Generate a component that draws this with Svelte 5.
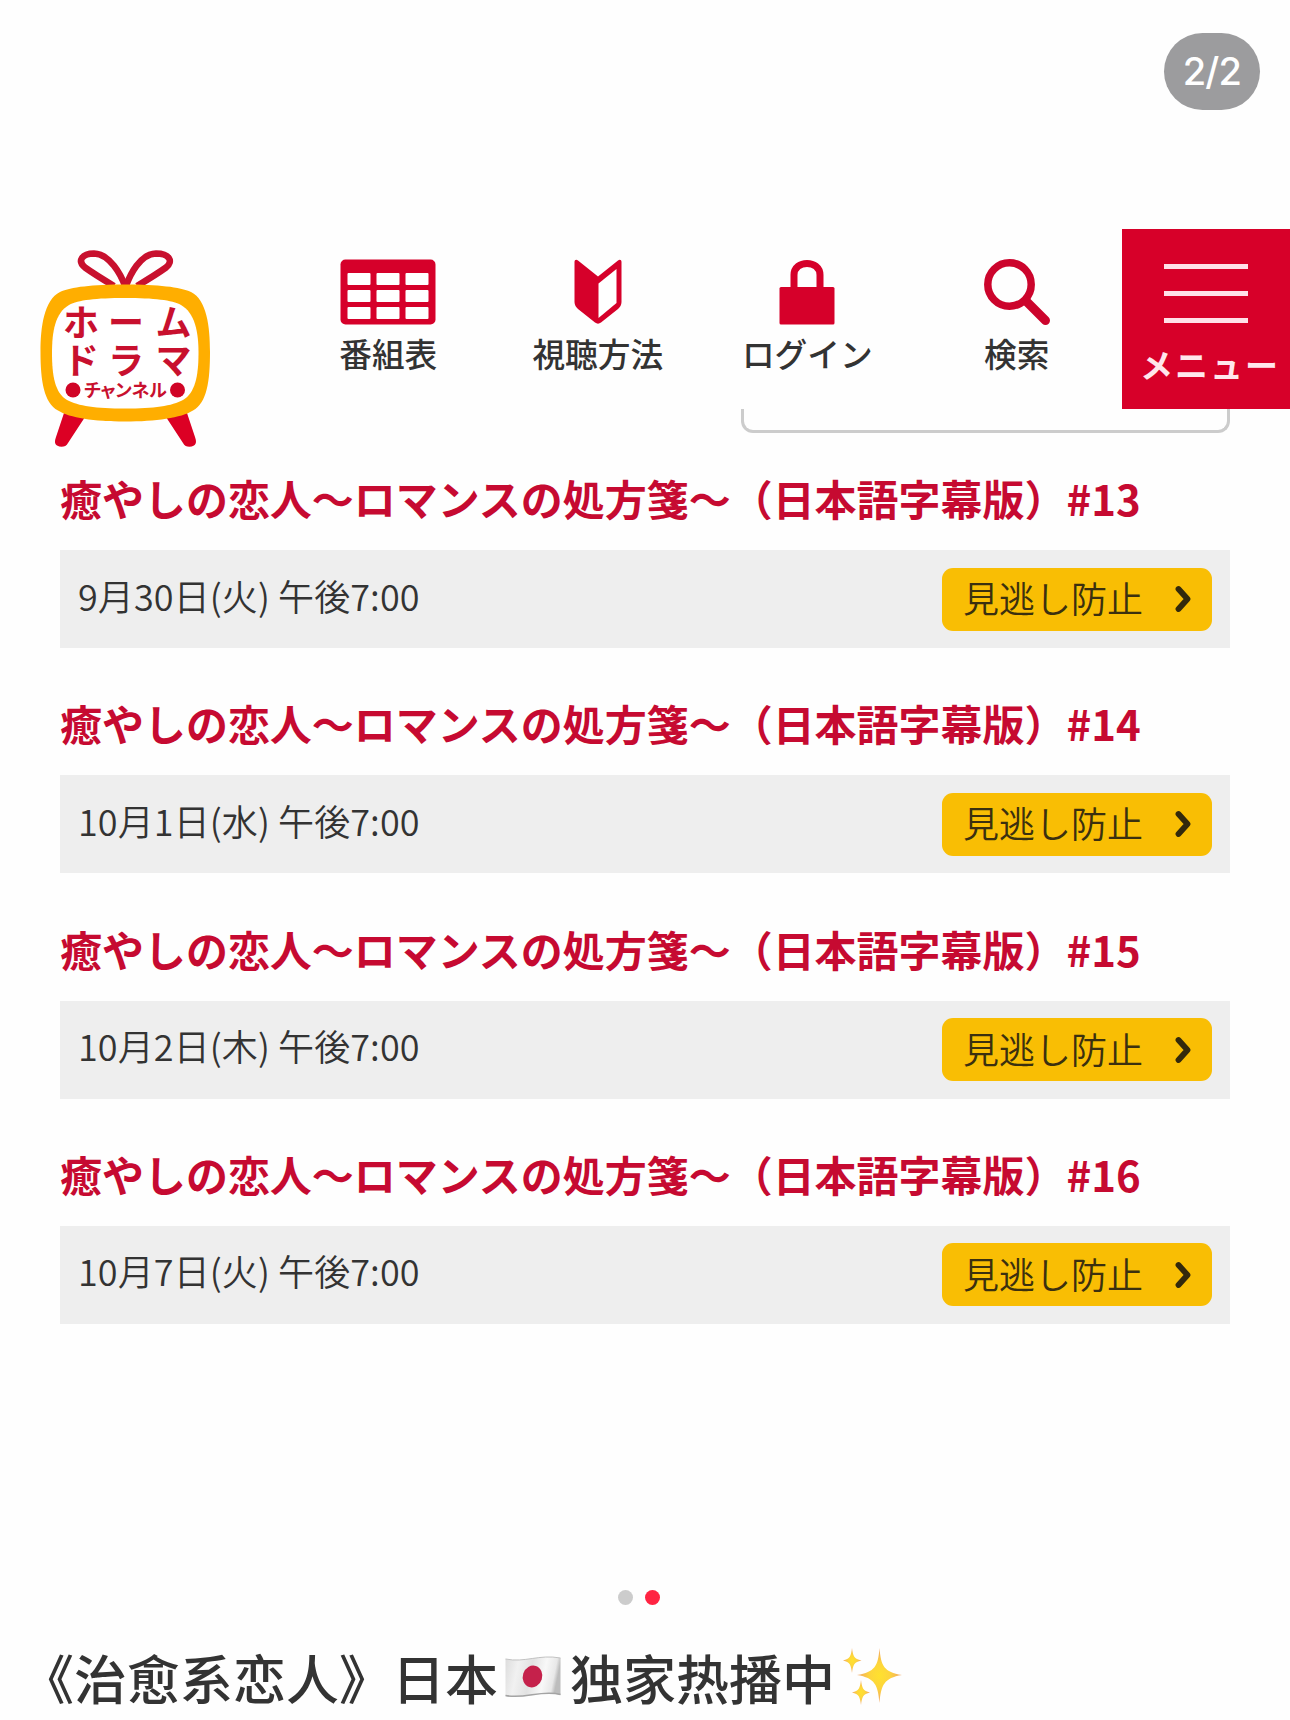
<script lang="ts">
	interface Episode {
		number: number;
		airs: string;
	}

	const title = '癒やしの恋人〜ロマンスの処方箋〜（日本語字幕版）';

	const episodes: Episode[] = [
		{ number: 13, airs: '9月30日(火) 午後7:00' },
		{ number: 14, airs: '10月1日(水) 午後7:00' },
		{ number: 15, airs: '10月2日(木) 午後7:00' },
		{ number: 16, airs: '10月7日(火) 午後7:00' }
	];

	const nav = [
		{ icon: 'table', label: '番組表' },
		{ icon: 'book', label: '視聴方法' },
		{ icon: 'lock', label: 'ログイン' },
		{ icon: 'search', label: '検索' }
	];

	const slides = 2;
	let current = $state(1);
</script>

<main class="post">
	<div class="topbar">
		<span class="counter">{current + 1}/{slides}</span>
	</div>

	<section class="slide">
		<header class="header">
			<div class="logo">
				<svg viewBox="0 0 220 200" width="220" height="200">
					<g fill="none" stroke="#c8102e" stroke-width="6.500" stroke-linejoin="round">
						<path d="M105 56C101 45 90 24 74 23.500C62 23.500 57 31 65 37.500C74 44 84 50 94 56" />
						<path d="M106 56C110 45 120 24 136 23.500C149 23.500 154 31 146 37.500C137 44 127 50 117 56" />
					</g>
					<path d="M44 183L65 187L48 213C46 217 41 218 37 215.500C34 213.500 35 210 36 207Z" fill="#dc0024" />
					<path d="M167 183L146 187L163 213C165 217 170 218 174 215.500C177 213.500 176 210 175 207Z" fill="#dc0024" />
					<path
						d="M105 54.500C138 54.500 160 57 171 62C187 70 190 97 190 122C190 151 187 173 173 180.500C161 188 136 191.500 105 191.500C74 191.500 50 188 38 180.500C24 173 20.500 151 20.500 122C20.500 97 24 70 40 62C51 57 72 54.500 105 54.500Z"
						fill="#ffae00"
					/>
					<path
						d="M105 68C134 68 152 70 161 75C175 83 178.500 102 178.500 123C178.500 146 175 163 163 170C152 176 134 178.500 105 178.500C76 178.500 58 176 47 170C35 163 32 146 32 123C32 102 35 83 49 75C58 70 76 68 105 68Z"
						fill="#fff"
					/>
					<g class="logo-text">
						<text x="43 88 135.500" y="105.500" font-size="36">ホーム</text>
						<text x="43 88 135.500" y="143.500" font-size="36">ドラマ</text>
						<text x="63.500 79 94.500 111.500 129" y="166.500" font-size="18">チャンネル</text>
					</g>
					<circle cx="53" cy="160" r="7.500" fill="#d00426" />
					<circle cx="157.500" cy="160" r="7.500" fill="#d00426" />
				</svg>
			</div>

			<nav class="nav">
				{#each nav as item}
					<a class="nav-item" href="#{item.icon}">
						{#if item.icon === 'table'}
							<svg viewBox="0 0 96 66" width="96" height="66">
								<rect x="0.500" y="0.500" width="95" height="65" rx="5" fill="#d6002a" />
								<g fill="#fff">
									{#each [14, 31, 48] as y}
										{#each [7.5, 36.5, 65.5] as x}
											<rect {x} {y} width="23" height="12" rx="1" />
										{/each}
									{/each}
								</g>
							</svg>
						{:else if item.icon === 'book'}
							<svg viewBox="0 0 48 66" width="48" height="66">
								<path d="M0.500 3C0.500 0.500 2.500 0 4 1.500L24 17.500L44 1.500C45.500 0 47.500 0.500 47.500 3V43C47.500 46 46 48 44 50L27 63.500C25 65 23 65 21 63.500L4 50C2 48 0.500 46 0.500 43Z" fill="#d6002a" />
								<path d="M24.500 24.500L42.500 10V44L24.500 59Z" fill="#fff" />
							</svg>
						{:else if item.icon === 'lock'}
							<svg viewBox="0 0 56 66" width="56" height="66">
								<path d="M15 30V16C15 0.500 41 0.500 41 16V30" fill="none" stroke="#d6002a" stroke-width="7" />
								<rect x="0.500" y="28" width="55" height="37.500" rx="1.500" fill="#d6002a" />
							</svg>
						{:else}
							<svg viewBox="0 0 66 66" width="66" height="66">
								<circle cx="25.500" cy="25.500" r="21.700" fill="none" stroke="#cc042c" stroke-width="7.500" />
								<path d="M43 43L61.500 61.500" fill="none" stroke="#cc042c" stroke-width="9" stroke-linecap="round" />
							</svg>
						{/if}
						<span>{item.label}</span>
					</a>
				{/each}
			</nav>

			<button class="menu" aria-label="メニュー">
				<span class="line"></span>
				<span class="line"></span>
				<span class="line"></span>
				<span class="menu-label">メニュー</span>
			</button>
		</header>

		<div class="select-edge"></div>

		<ul class="episodes">
			{#each episodes as episode (episode.number)}
				<li class="episode">
					<h2>{title}#{episode.number}</h2>
					<div class="bar">
						<time>{episode.airs}</time>
						<button class="remind">
							<span>見逃し防止</span>
							<svg viewBox="0 0 17 28" width="17" height="28">
								<path d="M3.500 4L12.500 14L3.500 24" fill="none" stroke="#33290c" stroke-width="5.800" stroke-linecap="round" stroke-linejoin="round" />
							</svg>
						</button>
					</div>
				</li>
			{/each}
		</ul>
	</section>

	<div class="dots">
		{#each { length: slides } as _, i}
			<button class="dot" class:active={i === current} aria-label="{i + 1}" onclick={() => (current = i)}></button>
		{/each}
	</div>

	<h1 class="caption">
		<span>《治愈系恋人》日本</span>
		<svg class="flag" viewBox="0 0 56 42" width="56" height="42">
			<defs>
				<linearGradient id="cloth" x1="0" x2="1" y1="0" y2="0.15">
					<stop offset="0" stop-color="#dcdcdc" />
					<stop offset="0.25" stop-color="#f1f1f1" />
					<stop offset="0.5" stop-color="#e2e2e2" />
					<stop offset="0.75" stop-color="#f8f8f8" />
					<stop offset="0.93" stop-color="#e8e8e8" />
					<stop offset="1" stop-color="#bdbdbd" />
				</linearGradient>
			</defs>
			<path d="M0.500 3C20 7 34 -2 55.500 2V39C36 34 20 44 0.500 40Z" fill="url(#cloth)" />
			<path d="M0.500 39.500C20 43.500 36 33.500 55.500 38.500" fill="none" stroke="#a4a4a4" stroke-width="1.500" />
			<path d="M0.500 3C20 7 34 -2 55.500 2" fill="none" stroke="#c2c2c2" />
			<ellipse cx="27.500" cy="20.500" rx="9.700" ry="11" transform="rotate(18 27.500 20.500)" fill="#c5214b" />
		</svg>
		<span>独家热播中</span>
		<svg class="sparkles" viewBox="0 0 60 60" width="60" height="60">
			<defs>
				<radialGradient id="glow">
					<stop offset="0" stop-color="#ffe12e" />
					<stop offset="0.45" stop-color="#fdd53c" />
					<stop offset="1" stop-color="#f0a468" />
				</radialGradient>
			</defs>
			<g fill="url(#glow)">
				<path d="M36.500 1C38 19 41 25 59 28C41 31 38 38 36.500 56C35 38 32 31 14 28C32 25 35 19 36.500 1Z" />
				<path d="M9 1C10 9 11 12 18.500 13.500C11 15 10 18 9 26C8 18 7 15 0 13.500C7 12 8 9 9 1Z" />
				<path d="M18 33C19 41 20 44 27 45.500C20 47 19 50 18 58C17 50 16 47 9 45.500C16 44 17 41 18 33Z" />
			</g>
		</svg>
	</h1>
</main>

<style>
	:global(body) {
		margin: 0;
		background: #fff;
	}

	.post {
		box-sizing: border-box;
		width: 1290px;
		height: 1720px;
		overflow: hidden;
		display: flex;
		flex-direction: column;
		background: #fefefe;
		color: #333;
		font-family: 'Noto Sans CJK JP', sans-serif;
	}

	button {
		border: 0;
		padding: 0;
		font: inherit;
		color: inherit;
	}

	svg {
		display: block;
		flex-shrink: 0;
	}

	.topbar {
		box-sizing: border-box;
		height: 229px;
		padding: 33px 30px 0 0;
		display: flex;
		justify-content: flex-end;
	}

	.counter {
		width: 96px;
		height: 77px;
		border-radius: 39px;
		background: #9c9c9e;
		color: #fff;
		font: 500 38px/76px Inter, sans-serif;
		letter-spacing: -0.8px;
		text-align: center;
	}

	.slide {
		height: 1352px;
	}

	.header {
		height: 179.5px;
		display: grid;
		grid-template-columns: 283.5px 838.5px 168px;
	}

	.logo {
		padding: 1px 0 0 20px;
	}

	.logo svg {
		overflow: visible;
	}

	.logo-text {
		fill: #c8102e;
		font-weight: 700;
	}

	.nav {
		display: grid;
		grid-template-columns: repeat(4, 209.5px);
	}

	.nav-item {
		padding-top: 29.5px;
		display: flex;
		flex-direction: column;
		align-items: center;
		gap: 7px;
		color: #333;
		font-size: 32.7px;
		font-weight: 500;
		line-height: 42px;
		text-decoration: none;
	}

	.menu {
		box-sizing: border-box;
		height: 179.5px;
		padding-top: 35px;
		display: flex;
		flex-direction: column;
		align-items: center;
		gap: 22px;
		background: #d70029;
		color: #ffe6ec;
	}

	.line {
		width: 84px;
		height: 5px;
		flex-shrink: 0;
		background: #ffe0e8;
	}

	.menu-label {
		padding-left: 8px;
		font-size: 33px;
		font-weight: 700;
		line-height: 38px;
		letter-spacing: 2px;
		white-space: nowrap;
	}

	/* bottom of the form field scrolled under the header */
	.select-edge {
		box-sizing: border-box;
		width: 489px;
		height: 24px;
		margin-left: 741px;
		border: 3px solid #ccc;
		border-top: 0;
		border-radius: 0 0 12px 12px;
	}

	.episodes {
		list-style: none;
		margin: 34.5px 60px 0;
		padding: 0;
	}

	.episode {
		margin-bottom: 44.2px;
	}

	h2 {
		margin: 0 0 20.2px;
		color: #c60a31;
		font-size: 41.98px;
		font-weight: 700;
		line-height: 62.9px;
		white-space: nowrap;
	}

	.bar {
		box-sizing: border-box;
		height: 98px;
		padding: 0 18px;
		display: flex;
		align-items: center;
		justify-content: space-between;
		background: #eee;
	}

	time {
		padding-bottom: 9px;
		font-size: 36px;
		font-weight: 350;
		line-height: 50px;
		letter-spacing: 0.1px;
	}

	.remind {
		box-sizing: border-box;
		width: 270px;
		height: 63px;
		padding: 0 20px 0 21px;
		display: flex;
		align-items: center;
		justify-content: space-between;
		border-radius: 11px;
		background: #f9be04;
		color: #3b300f;
		font-size: 36px;
		font-weight: 350;
		line-height: 50px;
	}

	.remind span {
		padding-bottom: 4px;
	}

	.dots {
		height: 33px;
		padding-right: 12px;
		display: flex;
		align-items: center;
		justify-content: center;
		gap: 12px;
	}

	.dot {
		width: 15px;
		height: 15px;
		border-radius: 50%;
		background: #ccc;
	}

	.dot.active {
		background: #ff2442;
	}

	.caption {
		margin: 25px 0 0 21px;
		display: flex;
		align-items: center;
		font-family: 'Noto Sans CJK SC', sans-serif;
		font-size: 53px;
		font-weight: 500;
		line-height: 76px;
		white-space: nowrap;
	}

	.flag {
		margin: 0 9px 0 7px;
	}

	.sparkles {
		margin-left: 8px;
	}
</style>
